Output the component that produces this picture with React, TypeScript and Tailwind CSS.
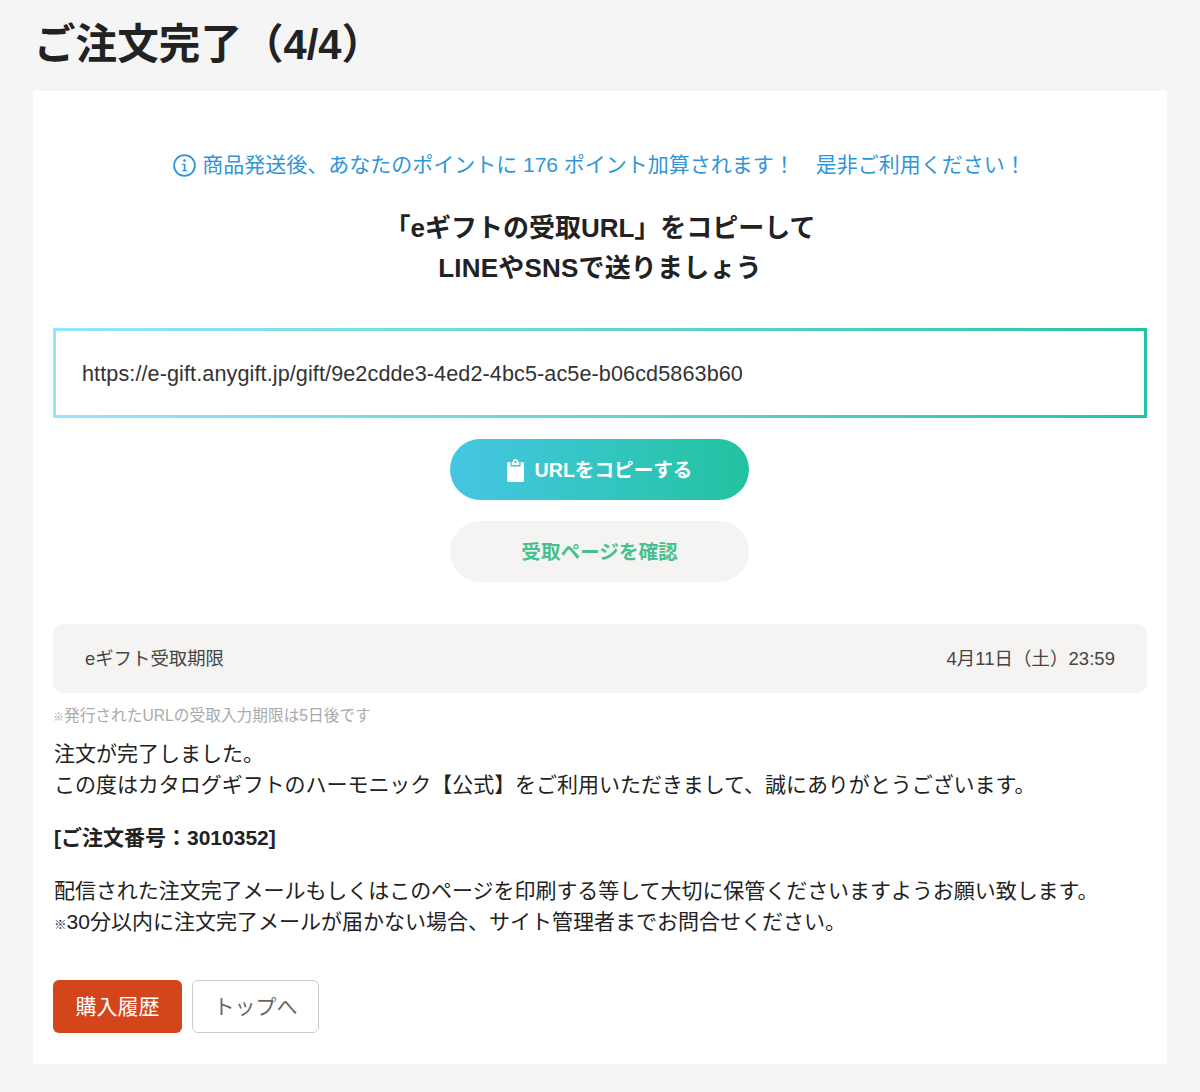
const font = "[font-family:'Liberation_Sans','Noto_Sans_CJK_JP',sans-serif]";

function ClipboardIcon() {
  return (
    <svg width="17" height="23" viewBox="0 0 18 23" preserveAspectRatio="none" className="shrink-0" aria-hidden="true">
      <path
        fill="#ffffff"
        fillRule="evenodd"
        d="M6 3 C6 1.3 7.3 0 9 0 C10.7 0 12 1.3 12 3 H13 V6 H5 V3 Z M9 1.8 A1.2 1.2 0 1 0 9 4.2 A1.2 1.2 0 1 0 9 1.8 Z M3.6 3 V7.4 H14.4 V3 H16.2 C17.2 3 18 3.8 18 4.8 V21.2 C18 22.2 17.2 23 16.2 23 H1.8 C0.8 23 0 22.2 0 21.2 V4.8 C0 3.8 0.8 3 1.8 3 Z"
      />
    </svg>
  );
}

function InfoIcon() {
  return (
    <svg width="23" height="23" viewBox="0 0 23 23" className="shrink-0" aria-hidden="true">
      <circle cx="11.5" cy="11.5" r="10.4" fill="none" stroke="#2f96d8" strokeWidth="1.8" />
      <circle cx="11.5" cy="6.6" r="1.3" fill="#2f96d8" />
      <path d="M9.2 9.8 H12.4 V16 H14 V17.2 H9.2 V16 H10.8 V11 H9.2 Z" fill="#2f96d8" />
    </svg>
  );
}

export default function App() {
  return (
    <div className={`${font} bg-[#f5f5f5] h-[1092px] overflow-hidden px-[33px] text-[#222222]`}>
      <h1 className="h-[91px] pt-[18px] pl-[1px] text-[41.6px] leading-[54px] font-bold">ご注文完了（4/4）</h1>
      <main className="bg-white h-[973px] px-[20px] pt-[58px]">
        <p className="flex items-center justify-center gap-[6px] pr-[1px] text-[21px] leading-[32px] text-[#2f96d8]">
          <InfoIcon />
          <span>商品発送後、あなたのポイントに 176 ポイント加算されます！　是非ご利用ください！</span>
        </p>
        <h2 className="mt-[27px] text-center text-[26px] leading-[40px] font-bold">
          「eギフトの受取URL」をコピーして
          <br />
          <span className="tracking-[0.2px]">LINEやSNSで送りましょう</span>
        </h2>
        <div className="mt-[40px] h-[90px] p-[3px] bg-gradient-to-r from-[#93e6ff] to-[#20c4a4]">
          <div className="flex h-full items-center bg-white pl-[26px] pt-[2px] text-[21.6px] tracking-[0.1px] text-[#333333]">
            https://e-gift.anygift.jp/gift/9e2cdde3-4ed2-4bc5-ac5e-b06cd5863b60
          </div>
        </div>
        <div className="mt-[21px] flex flex-col items-center gap-[21px] pr-[1px]">
          <button className="flex h-[61px] w-[299px] items-center justify-center gap-[11px] rounded-full bg-gradient-to-r from-[#45c6e4] to-[#20c39f] pt-[2px] text-[19.6px] font-bold text-white">
            <ClipboardIcon />
            <span>URLをコピーする</span>
          </button>
          <button className="h-[61px] w-[299px] rounded-full bg-[#f5f4f2] pt-[2px] text-[19.6px] font-bold text-[#46c08e]">
            受取ページを確認
          </button>
        </div>
        <div className="mt-[42px] flex h-[69px] items-center justify-between rounded-[10px] bg-[#f5f4f2] px-[32px] text-[18.4px] text-[#444444]">
          <span>eギフト受取期限</span>
          <span className="tracking-[0.1px]">4月11日（土）23:59</span>
        </div>
        <p className="mt-[12px] text-[15.7px] leading-[22px] text-[#aaaaaa]"><span className="text-[0.7em] leading-none">※</span>発行されたURLの受取入力期限は5日後です</p>
        <p className="mt-[11px] pl-[1px] text-[21px] leading-[31px]">
          注文が完了しました。
          <br />
          <span className="tracking-[-0.04px]">この度はカタログギフトのハーモニック【公式】をご利用いただきまして、誠にありがとうございます。</span>
        </p>
        <p className="mt-[22px] pl-[1px] text-[21px] leading-[31px] font-bold">[ご注文番号：3010352]</p>
        <p className="mt-[22px] pl-[1px] text-[21px] leading-[31px]">
          <span className="tracking-[-0.05px]">配信された注文完了メールもしくはこのページを印刷する等して大切に保管くださいますようお願い致します。</span>
          <br />
          <span className="text-[0.6em] leading-none text-[#111111]">※</span>30分以内に注文完了メールが届かない場合、サイト管理者までお問合せください。
        </p>
        <div className="mt-[43px] flex gap-[10px]">
          <button className="h-[53px] w-[129px] rounded-[6px] bg-[#d3461c] text-[21px] text-white">購入履歴</button>
          <button className="h-[53px] w-[127px] rounded-[6px] border border-[#cccccc] bg-white text-[21px] text-[#666666]">トップへ</button>
        </div>
      </main>
    </div>
  );
}
